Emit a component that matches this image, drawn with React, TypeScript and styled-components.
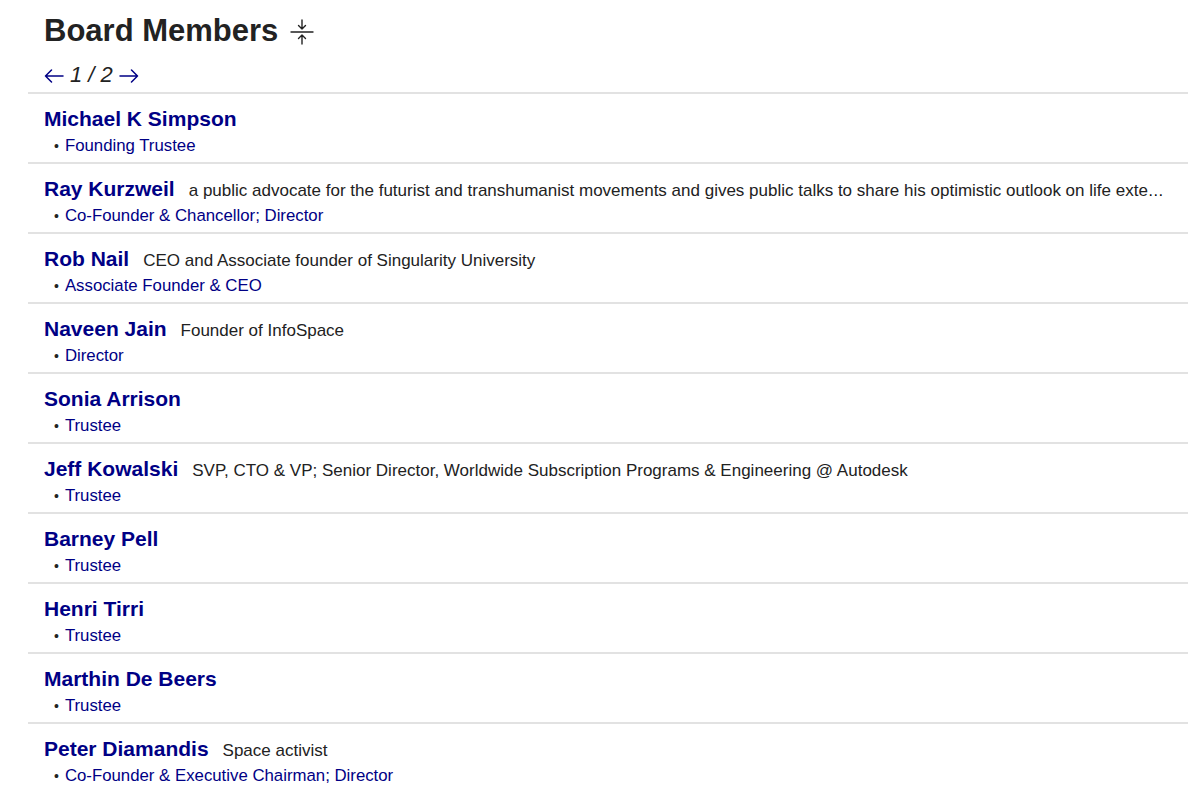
import React from "react";
import styled, { createGlobalStyle } from "styled-components";

const Global = createGlobalStyle`
  html, body { margin: 0; padding: 0; background: #fff; }
  body { font-family: "Liberation Sans", Arial, Helvetica, sans-serif; }
`;

const Page = styled.div`
  padding: 12px 12px 0 28px;
`;

const Header = styled.div`
  padding: 0 16px;
`;

const Title = styled.h1`
  margin: 0;
  font-size: 31px;
  line-height: 37px;
  font-weight: 700;
  color: #222;
  display: flex;
  align-items: center;
  gap: 12px;
`;

const CollapseIcon = styled.svg`
  width: 24px;
  height: 28px;
  margin-top: 2px;
`;

const Pager = styled.div`
  margin-top: 13px;
  margin-bottom: 5px;
  height: 25px;
  display: flex;
  align-items: center;
  gap: 6px;
`;

const ArrowIcon = styled.svg`
  width: 20px;
  height: 14px;
  margin-top: 2px;
  flex: none;
`;

const PageNum = styled.span`
  font-style: italic;
  font-size: 22px;
  line-height: 25px;
  color: #222;
`;

const List = styled.div``;

const Row = styled.div`
  border-top: 2px solid #e2e2e2;
  padding: 13px 16px 7px;
  height: 70px;
  box-sizing: border-box;
`;

const NameLine = styled.div`
  white-space: nowrap;
  overflow: hidden;
  text-overflow: ellipsis;
  line-height: 24px;
`;

const Name = styled.span`
  font-size: 21px;
  font-weight: 700;
  color: #000085;
`;

const Desc = styled.span`
  font-size: 17px;
  color: #222;
  margin-left: 14px;
`;

const Role = styled.div`
  margin-top: 3px;
  font-size: 16.8px;
  line-height: 20px;
  color: #000085;
  display: flex;
  align-items: center;
  padding-left: 10px;
`;

const Bullet = styled.span`
  font-size: 14px;
  margin-right: 6px;
  color: #222;
`;

const members = [
  { name: "Michael K Simpson", role: "Founding Trustee" },
  {
    name: "Ray Kurzweil",
    desc: "a public advocate for the futurist and transhumanist movements and gives public talks to share his optimistic outlook on life extension technologies",
    role: "Co-Founder & Chancellor; Director",
  },
  { name: "Rob Nail", desc: "CEO and Associate founder of Singularity University", role: "Associate Founder & CEO" },
  { name: "Naveen Jain", desc: "Founder of InfoSpace", role: "Director" },
  { name: "Sonia Arrison", role: "Trustee" },
  {
    name: "Jeff Kowalski",
    desc: "SVP, CTO & VP; Senior Director, Worldwide Subscription Programs & Engineering @ Autodesk",
    role: "Trustee",
  },
  { name: "Barney Pell", role: "Trustee" },
  { name: "Henri Tirri", role: "Trustee" },
  { name: "Marthin De Beers", role: "Trustee" },
  { name: "Peter Diamandis", desc: "Space activist", role: "Co-Founder & Executive Chairman; Director" },
];

function Arrow({ dir }: { dir: "left" | "right" }) {
  return (
    <ArrowIcon viewBox="0 0 20 14" fill="none" stroke="#000085" strokeWidth="1.5" strokeLinecap="round" strokeLinejoin="round">
      {dir === "left" ? <path d="M19 7H1.5M7.5 1 1.5 7l6 6" /> : <path d="M1 7h17.5M12.5 1l6 6-6 6" />}
    </ArrowIcon>
  );
}

export default function App() {
  return (
    <Page>
      <Global />
      <Header>
        <Title>
          Board Members
          <CollapseIcon viewBox="0 0 24 28" fill="none" stroke="#222" strokeWidth="1.4" strokeLinecap="round" strokeLinejoin="round">
            <path d="M12 2v9M8.5 7.5 12 11l3.5-3.5" />
            <path d="M1 14h22" />
            <path d="M12 26v-9M8.5 20.5 12 17l3.5 3.5" />
          </CollapseIcon>
        </Title>
        <Pager>
          <Arrow dir="left" />
          <PageNum>1 / 2</PageNum>
          <Arrow dir="right" />
        </Pager>
      </Header>
      <List>
        {members.map((m) => (
          <Row key={m.name}>
            <NameLine>
              <Name>{m.name}</Name>
              {m.desc && <Desc>{m.desc}</Desc>}
            </NameLine>
            <Role>
              <Bullet>•</Bullet>
              {m.role}
            </Role>
          </Row>
        ))}
      </List>
    </Page>
  );
}
